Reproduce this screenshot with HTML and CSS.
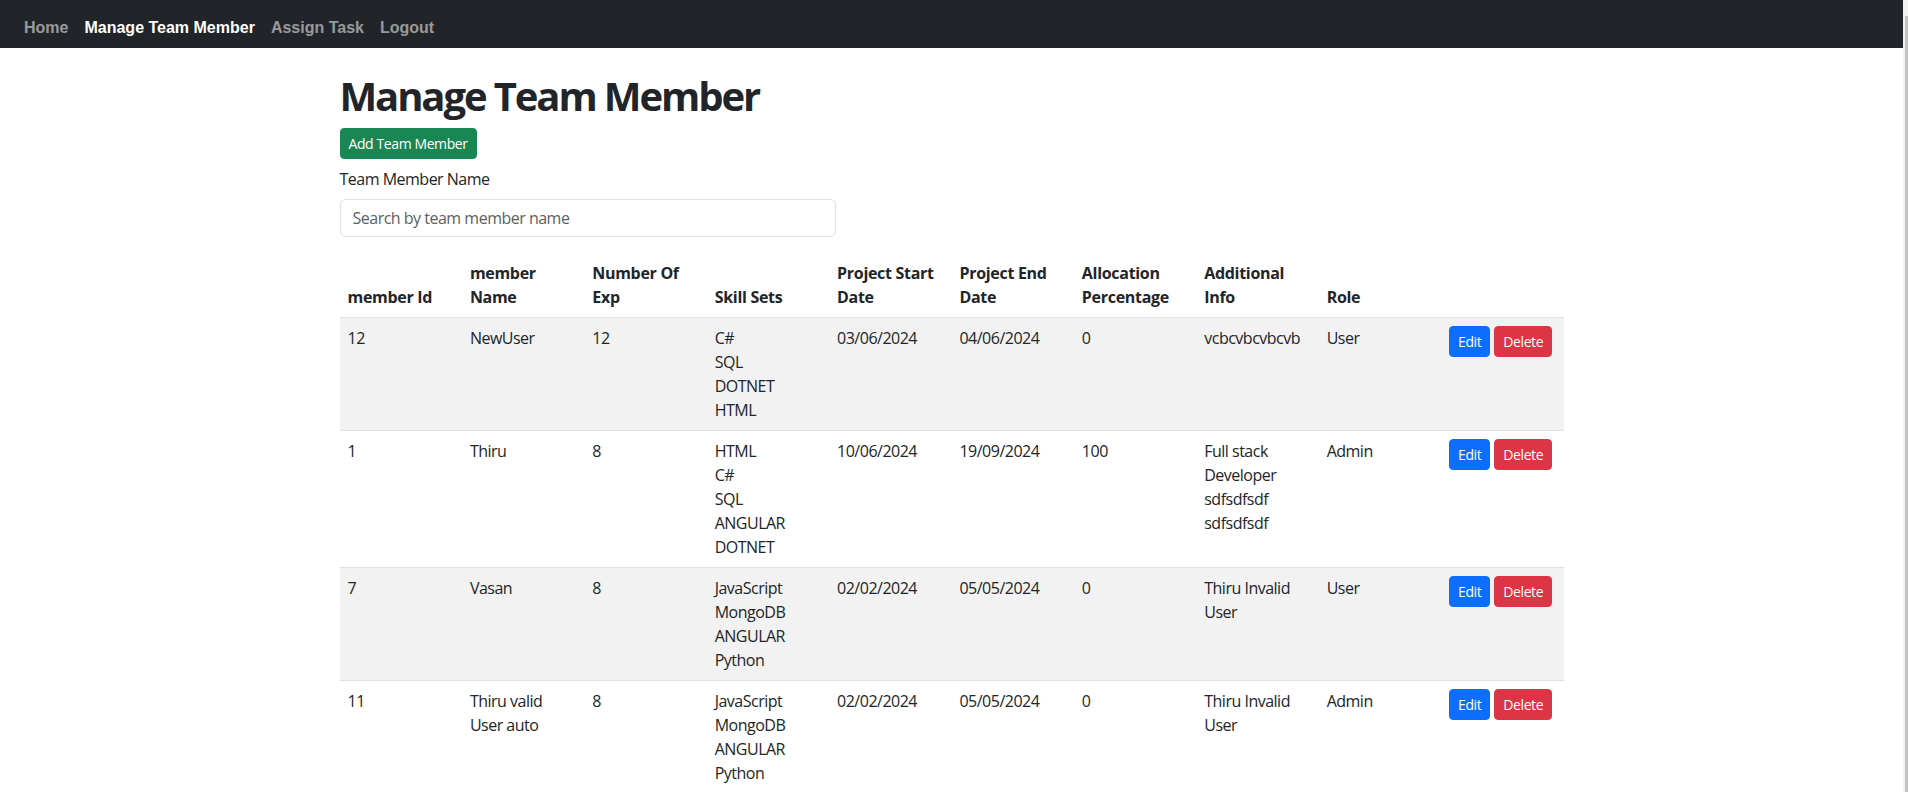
FILE: index.html
```html
<!DOCTYPE html>
<html lang="en">
<head>
<meta charset="utf-8">
<title>Manage Team Member</title>
<link rel="stylesheet" href="styles.css">
</head>
<body>
<div class="frame">
  <div class="page">
    <nav class="navbar">
      <a class="nav-link" href="#">Home</a>
      <a class="nav-link active" href="#">Manage Team Member</a>
      <a class="nav-link" href="#">Assign Task</a>
      <a class="nav-link" href="#">Logout</a>
    </nav>
    <main class="container">
      <h1 class="title">Manage Team Member</h1>
      <button class="btn btn-success add-btn" type="button">Add Team Member</button>
      <div class="search">
        <label class="form-label" for="search">Team Member Name</label>
        <input class="form-control" id="search" type="text" placeholder="Search by team member name">
      </div>
      <table class="table">
        <thead>
          <tr>
            <th>member Id</th>
            <th>member Name</th>
            <th>Number Of Exp</th>
            <th>Skill Sets</th>
            <th>Project Start Date</th>
            <th>Project End Date</th>
            <th>Allocation Percentage</th>
            <th>Additional Info</th>
            <th>Role</th>
            <th></th>
          </tr>
        </thead>
        <tbody>
          <tr class="striped">
            <td>12</td>
            <td>NewUser</td>
            <td>12</td>
            <td><div>C#</div><div>SQL</div><div>DOTNET</div><div>HTML</div></td>
            <td>03/06/2024</td>
            <td>04/06/2024</td>
            <td>0</td>
            <td>vcbcvbcvbcvb</td>
            <td>User</td>
            <td class="actions"><button class="btn btn-edit" type="button">Edit</button><button class="btn btn-delete" type="button">Delete</button></td>
          </tr>
          <tr>
            <td>1</td>
            <td>Thiru</td>
            <td>8</td>
            <td><div>HTML</div><div>C#</div><div>SQL</div><div>ANGULAR</div><div>DOTNET</div></td>
            <td>10/06/2024</td>
            <td>19/09/2024</td>
            <td>100</td>
            <td>Full stack Developer sdfsdfsdf sdfsdfsdf</td>
            <td>Admin</td>
            <td class="actions"><button class="btn btn-edit" type="button">Edit</button><button class="btn btn-delete" type="button">Delete</button></td>
          </tr>
          <tr class="striped">
            <td>7</td>
            <td>Vasan</td>
            <td>8</td>
            <td><div>JavaScript</div><div>MongoDB</div><div>ANGULAR</div><div>Python</div></td>
            <td>02/02/2024</td>
            <td>05/05/2024</td>
            <td>0</td>
            <td>Thiru Invalid User</td>
            <td>User</td>
            <td class="actions"><button class="btn btn-edit" type="button">Edit</button><button class="btn btn-delete" type="button">Delete</button></td>
          </tr>
          <tr>
            <td>11</td>
            <td>Thiru valid User auto</td>
            <td>8</td>
            <td><div>JavaScript</div><div>MongoDB</div><div>ANGULAR</div><div>Python</div></td>
            <td>02/02/2024</td>
            <td>05/05/2024</td>
            <td>0</td>
            <td>Thiru Invalid User</td>
            <td>Admin</td>
            <td class="actions"><button class="btn btn-edit" type="button">Edit</button><button class="btn btn-delete" type="button">Delete</button></td>
          </tr>
        </tbody>
      </table>
    </main>
  </div>
  <div class="scrollbar"><div class="thumb"></div></div>
</div>
</body>
</html>
```

FILE: styles.css
```css
* { box-sizing: border-box; }

html, body {
  margin: 0;
  padding: 0;
  height: 100%;
  overflow: hidden;
}

body {
  font-family: "Open Sans", "Noto Sans", sans-serif;
  font-size: 16px;
  line-height: 24px;
  letter-spacing: -0.5px;
  color: #212529;
  background: #fff;
}

.frame {
  display: flex;
  height: 100vh;
}

.page {
  flex: 1;
  min-width: 0;
  overflow: hidden;
}

.scrollbar {
  width: 5px;
  background: #f1f1f1;
  display: flex;
  flex-direction: column;
  padding-top: 16px;
}

.thumb {
  flex: 1;
  margin-left: 2px;
  background: #c1c1c1;
}

/* navbar */
.navbar {
  height: 48px;
  background: #212529;
  display: flex;
  align-items: flex-start;
  padding: 8px 16px 0;
}

.nav-link {
  font-family: "Liberation Sans", Arial, sans-serif;
  font-weight: 700;
  font-size: 16px;
  line-height: 24px;
  letter-spacing: 0;
  padding: 8px;
  color: rgba(255, 255, 255, 0.55);
  text-decoration: none;
}

.nav-link.active {
  color: #fff;
}

/* content */
.container {
  max-width: 1248px;
  margin: 0 auto;
  padding: 24px 12px 0;
}

.title {
  margin: 0 0 8px;
  font-size: 40px;
  line-height: 48px;
  font-weight: 700;
  letter-spacing: -2.1px;
}

.btn {
  display: inline-block;
  font-family: inherit;
  font-size: 14px;
  line-height: 21px;
  letter-spacing: -0.4px;
  padding: 4px 8px;
  border: 1px solid transparent;
  border-radius: 4px;
  color: #fff;
  cursor: pointer;
}

.btn-success {
  background: #198754;
  border-color: #198754;
}

.add-btn {
  display: block;
  margin-bottom: 8px;
}

.search {
  margin-bottom: 16px;
}

.form-label {
  display: block;
  margin-bottom: 8px;
}

.form-control {
  display: block;
  width: 496px;
  height: 38px;
  padding: 6px 12px;
  font-family: inherit;
  font-size: 16px;
  line-height: 24px;
  letter-spacing: -0.5px;
  color: #212529;
  border: 1px solid #dee2e6;
  border-radius: 6px;
  background: #fff;
}

.form-control::placeholder {
  color: #5c5f62;
}

/* table */
.table {
  width: 100%;
  table-layout: fixed;
  border-collapse: collapse;
}

.table th,
.table td {
  padding: 8px;
  text-align: left;
  border-bottom: 1px solid #dee2e6;
}

.table th {
  font-weight: 700;
  vertical-align: bottom;
  letter-spacing: -0.3px;
}

.table td {
  vertical-align: top;
}

.table tr.striped td {
  background: #f2f2f2;
}

.actions {
  white-space: nowrap;
}

.btn-edit {
  background: #0d6efd;
  border-color: #0d6efd;
  margin-right: 4px;
}

.btn-delete {
  background: #dc3545;
  border-color: #dc3545;
}
```
